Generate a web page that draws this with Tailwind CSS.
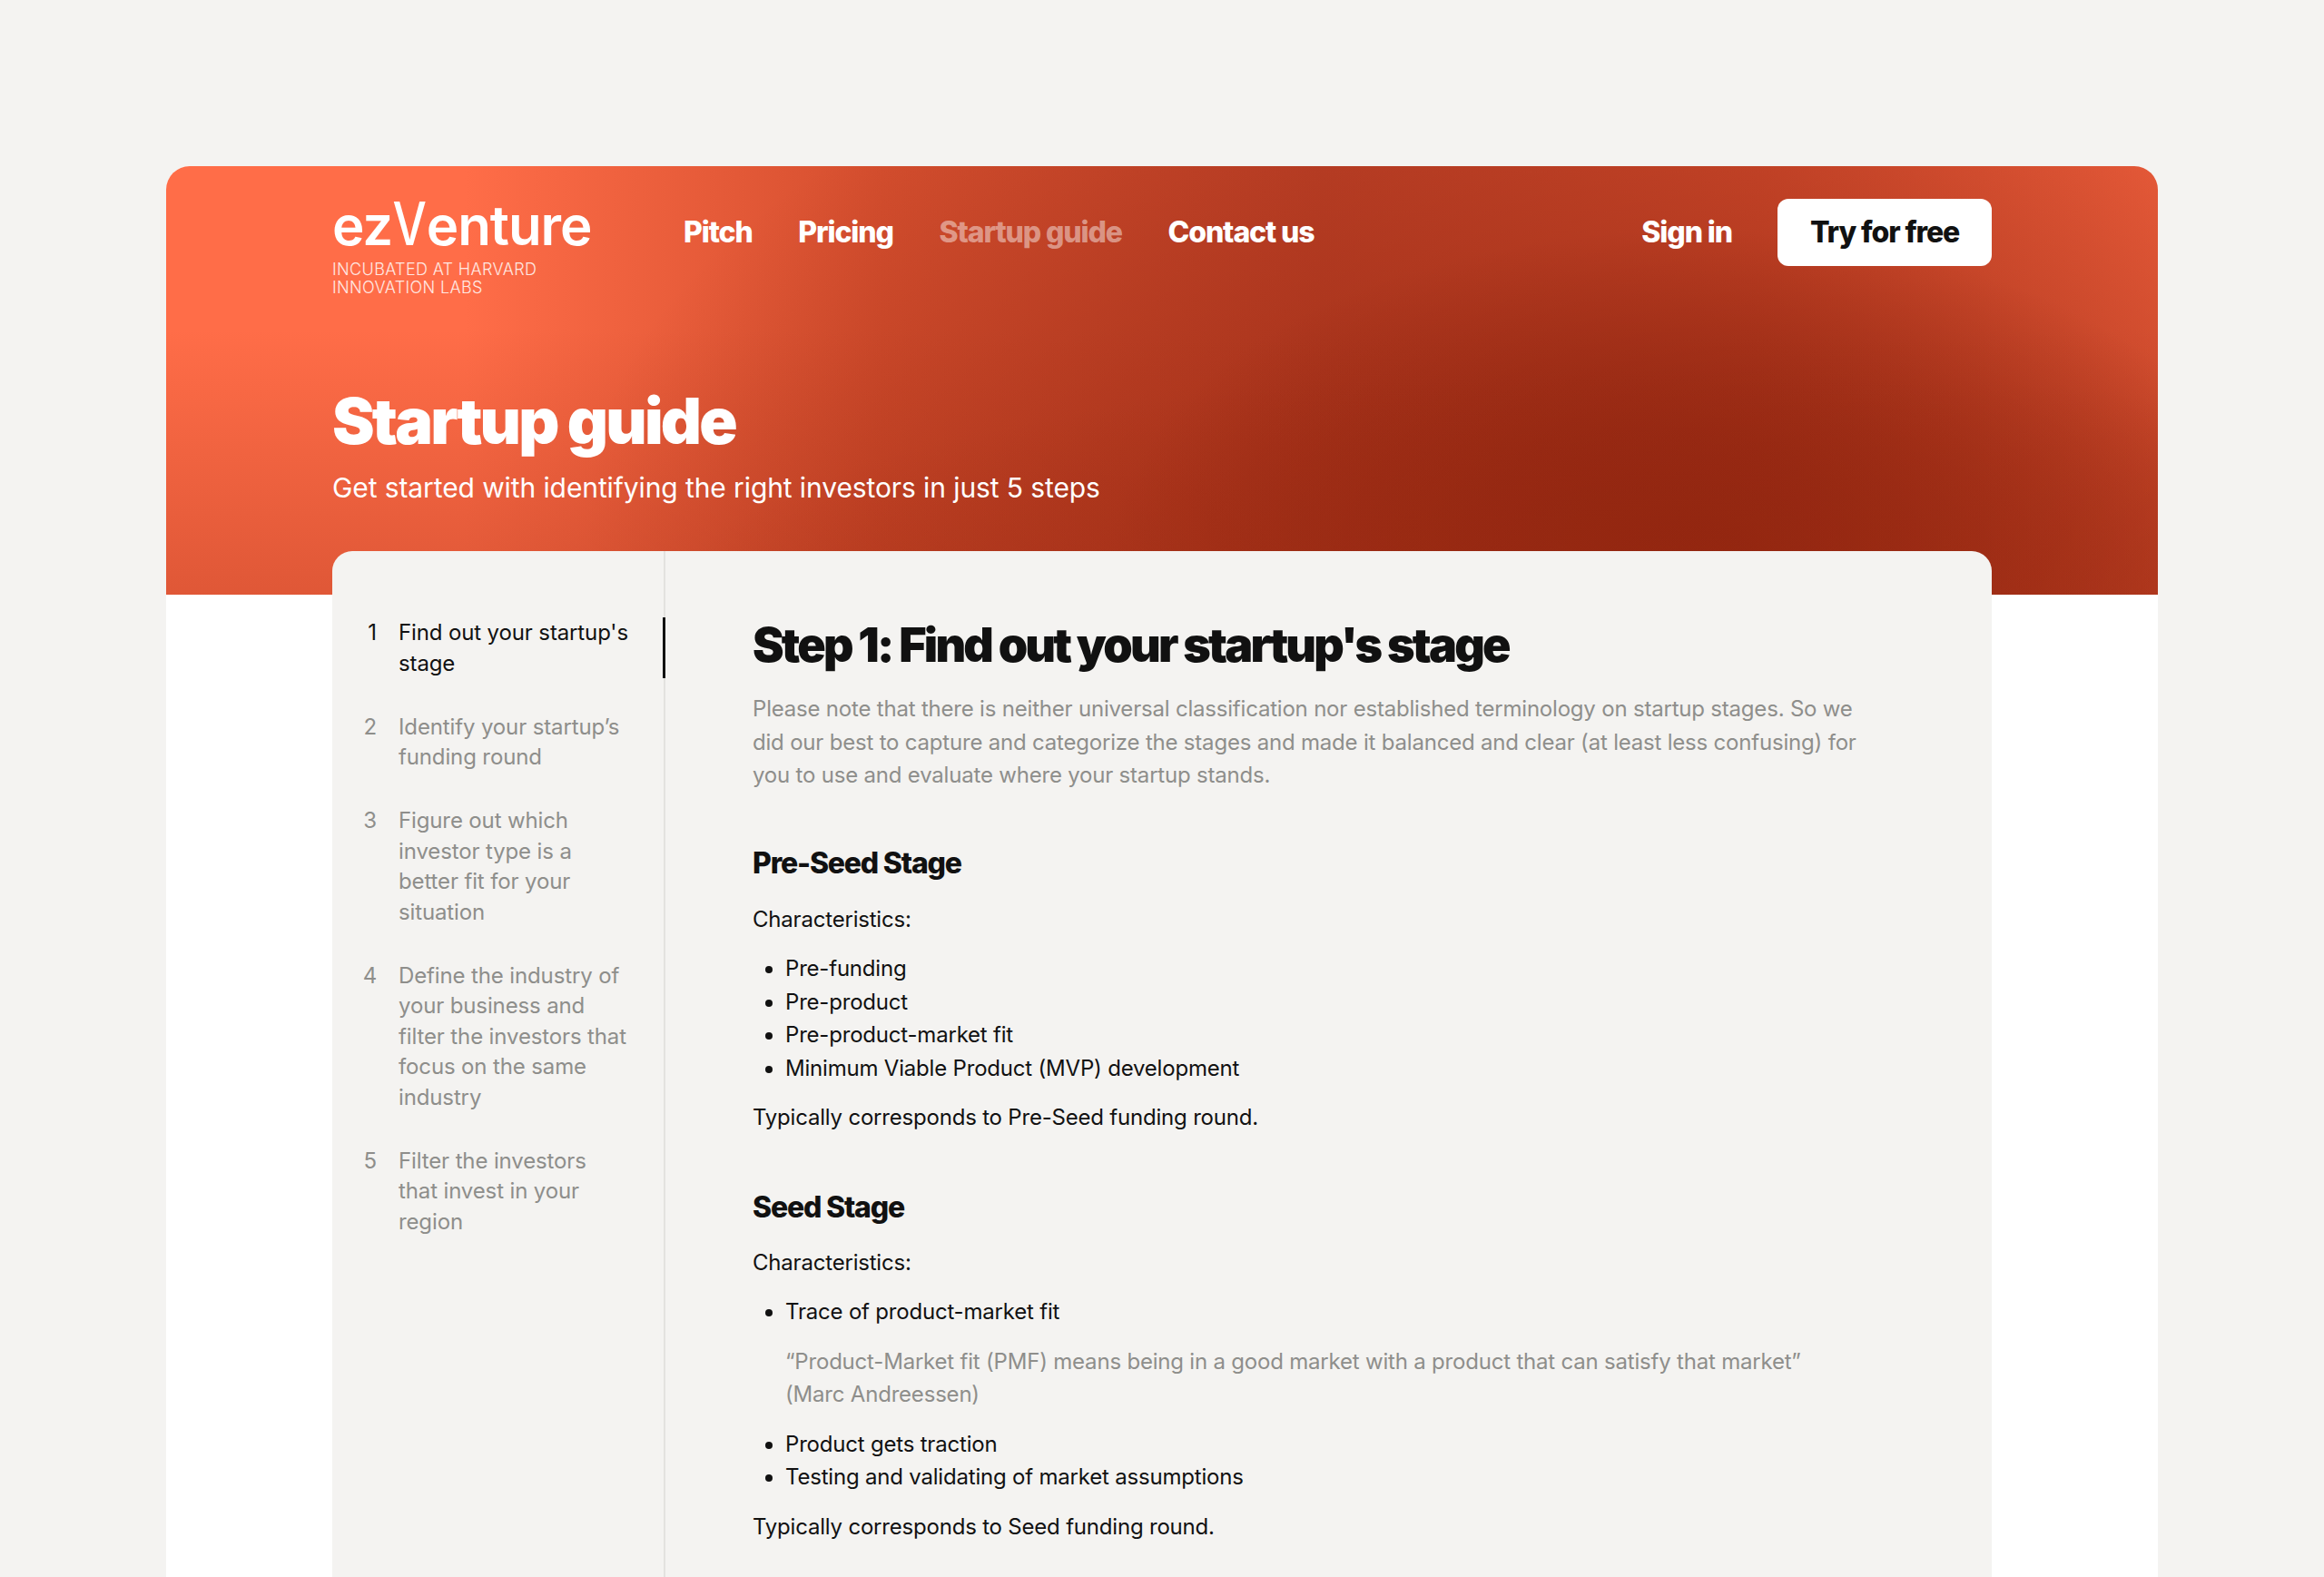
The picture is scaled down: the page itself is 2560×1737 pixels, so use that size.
<!DOCTYPE html>
<html lang="en">
<head>
  <meta charset="UTF-8" />
  <title>Startup guide</title>
  <script src="https://cdn.jsdelivr.net/npm/@tailwindcss/browser@4"></script>
</head>
<body class="bg-[#f4f3f1] font-['Inter',sans-serif] h-[1737px] overflow-hidden">
  <div class="mx-[183px] mt-[183px] pt-0 h-[1554px] bg-white rounded-t-[26px] overflow-hidden">
    <!-- gradient header -->
    <header class="h-[472px] px-[183px] bg-[radial-gradient(ellipse_1100px_260px_at_1650px_480px,#98291180_0%,#98291100_100%),linear-gradient(180deg,#a02c1400_38%,#a02c1455_100%),radial-gradient(ellipse_640px_360px_at_1680px_430px,#8a220e_0%,#8a220e00_100%),radial-gradient(ellipse_1100px_600px_at_1560px_390px,#a02e16_0%,#a02e1600_100%),linear-gradient(90deg,#ff6d48_0%,#ff6d48_15%,#d44e2e_36%,#bd4128_58%,#cf4a2d_80%,#ee5f3d_100%)]">
      <div class="flex items-start pt-[36px]">
        <div class="w-[387px] shrink-0 text-white">
          <div class="pt-[2px] h-[57px] text-[60px] leading-[55px] font-semibold tracking-[-1.1px] whitespace-nowrap">ez<span class="inline-block text-[66px] leading-[0] font-medium scale-x-[0.8] -mx-[4px]">V</span>enture</div>
          <div class="mt-[11px] text-[18px] leading-[19.5px] tracking-[0.35px] font-light text-white/85">INCUBATED AT HARVARD<br />INNOVATION LABS</div>
        </div>
        <nav class="flex items-center h-[74px] gap-[50.5px] text-[32px] font-extrabold tracking-[-1.1px] text-white">
          <a>Pitch</a>
          <a>Pricing</a>
          <a class="text-white/45">Startup guide</a>
          <a>Contact us</a>
        </nav>
        <div class="ml-auto flex items-center h-[74px] gap-[50px] text-[32px] font-extrabold tracking-[-1.1px]">
          <a class="text-white">Sign in</a>
          <a class="h-[74px] w-[236px] flex items-center justify-center bg-white rounded-[12px] text-[#111]">Try for free</a>
        </div>
      </div>
      <h1 class="mt-[98px] text-[70px] leading-[80px] font-black tracking-[-2.8px] text-white">Startup guide</h1>
      <p class="mt-[13px] text-[30px] leading-[40px] font-normal tracking-[-0.1px] text-white">Get started with identifying the right investors in just 5 steps</p>
    </header>

    <!-- card -->
    <div class="mx-[183px] -mt-[48px] h-[1130px] bg-[#f4f3f1] rounded-t-[22px] flex">
      <aside class="w-[367px] shrink-0 border-r-2 border-[#e3e2df] pt-[73px]">
        <ol class="flex flex-col gap-[36.6px] text-[24px] leading-[33.5px] tracking-[-0.13px] text-[#8e8e8b]">
          <li class="flex text-[#111] border-r-[3px] border-[#111] -mr-[2px]"><span class="w-[73px] shrink-0 pr-[24px] text-right">1</span><span class="w-[258px]">Find out your startup's stage</span></li>
          <li class="flex"><span class="w-[73px] shrink-0 pr-[24px] text-right">2</span><span class="w-[258px]">Identify your startup’s funding round</span></li>
          <li class="flex"><span class="w-[73px] shrink-0 pr-[24px] text-right">3</span><span class="w-[220px]">Figure out which investor type is a better fit for your situation</span></li>
          <li class="flex"><span class="w-[73px] shrink-0 pr-[24px] text-right">4</span><span class="w-[258px]">Define the industry of your business and filter the investors that focus on the same industry</span></li>
          <li class="flex"><span class="w-[73px] shrink-0 pr-[24px] text-right">5</span><span class="w-[220px]">Filter the investors that invest in your region</span></li>
        </ol>
      </aside>
      <main class="flex-1 pl-[96px] pr-[120px] pt-[74px] text-[24px] leading-[36.5px] tracking-[-0.2px] text-[#111]">
        <h2 class="text-[52px] leading-[60px] font-black tracking-[-2.8px]">Step 1: Find out your startup's stage</h2>
        <p class="mt-[22px] text-[#8e8e8b]">Please note that there is neither universal classification nor established terminology on startup stages. So we did our best to capture and categorize the stages and made it balanced and clear (at least less confusing) for you to use and evaluate where your startup stands.</p>

        <h3 class="mt-[58px] text-[32px] leading-[40px] font-extrabold tracking-[-1.2px]">Pre-Seed Stage</h3>
        <p class="mt-[24px]">Characteristics:</p>
        <ul class="mt-[18px] list-disc pl-[36px]">
          <li>Pre-funding</li>
          <li>Pre-product</li>
          <li>Pre-product-market fit</li>
          <li>Minimum Viable Product (MVP) development</li>
        </ul>
        <p class="mt-[18px]">Typically corresponds to Pre-Seed funding round.</p>

        <h3 class="mt-[60px] text-[32px] leading-[40px] font-extrabold tracking-[-1.2px]">Seed Stage</h3>
        <p class="mt-[23px]">Characteristics:</p>
        <ul class="mt-[18px] list-disc pl-[36px]">
          <li>Trace of product-market fit</li>
        </ul>
        <p class="mt-[18px] pl-[36px] pr-[40px] text-[#8e8e8b]">“Product-Market fit (PMF) means being in a good market with a product that can satisfy that market” (Marc Andreessen)</p>
        <ul class="mt-[18px] list-disc pl-[36px]">
          <li>Product gets traction</li>
          <li>Testing and validating of market assumptions</li>
        </ul>
        <p class="mt-[18px]">Typically corresponds to Seed funding round.</p>
      </main>
    </div>
  </div>
</body>
</html>
